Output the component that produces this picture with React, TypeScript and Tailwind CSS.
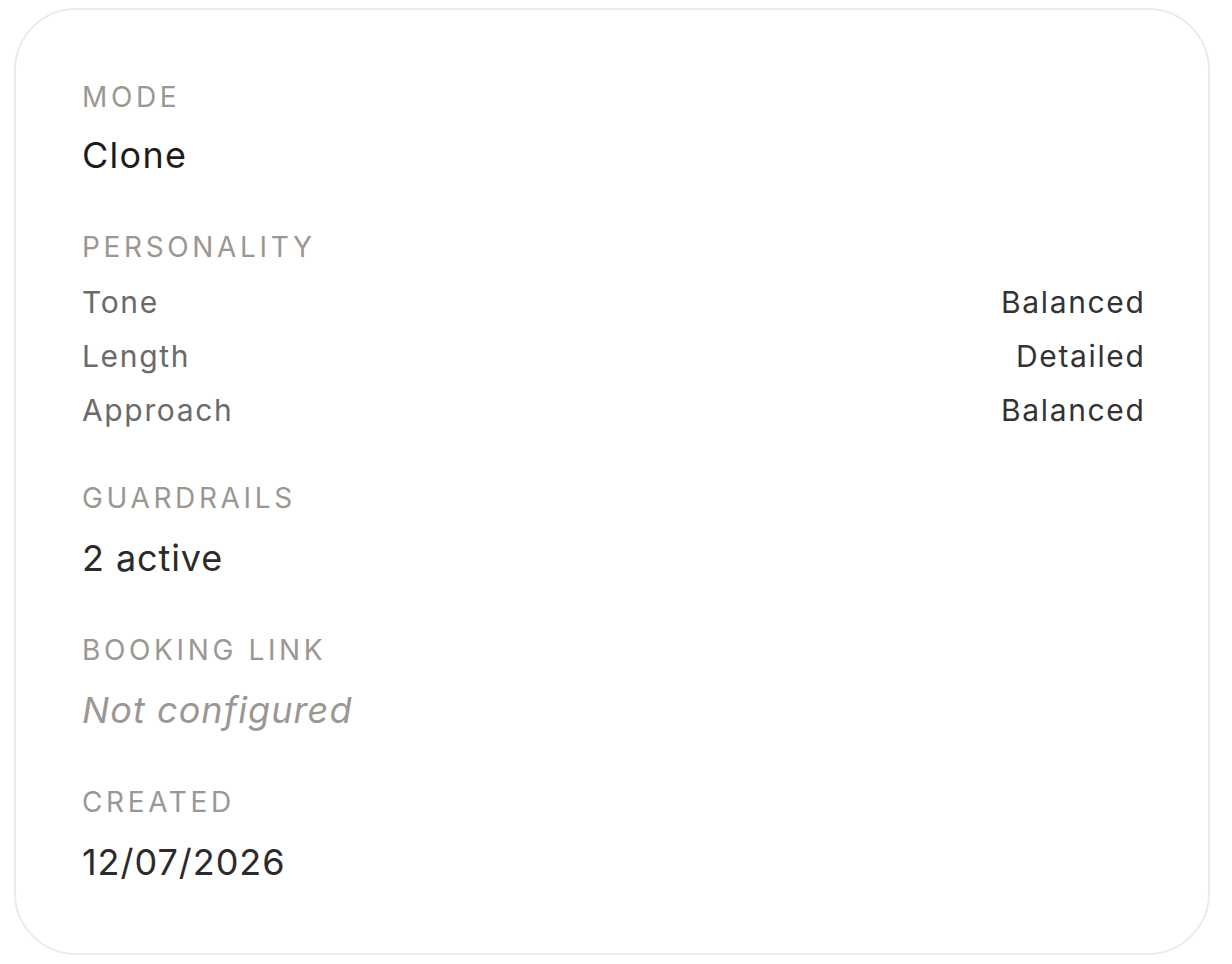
import React from "react";

function Label({ children }: { children: React.ReactNode }) {
  return (
    <div className="text-[28px] leading-[36px] tracking-[0.13em] uppercase text-[#9b9792]">
      {children}
    </div>
  );
}

function Row({ k, v }: { k: string; v: string }) {
  return (
    <div className="flex items-center justify-between text-[30px] leading-[40px] tracking-[0.055em]">
      <span className="text-[#6b6a69]">{k}</span>
      <span className="text-[#333333] -mr-[3.5px]">{v}</span>
    </div>
  );
}

export default function App() {
  return (
    <div
      className="w-[1232px] h-[964px] bg-white pt-[8px] pl-[14px]"
      style={{ fontFamily: "Inter, 'Noto Sans', sans-serif" }}
    >
      <div className="w-[1196px] h-[947px] rounded-[62px] border-2 border-[#ebebeb] bg-white px-[66px] pt-[69px]">
        <div className="flex flex-col gap-[50px]">
          <div>
            <Label>Mode</Label>
            <div className="mt-[16px] text-[36px] leading-[48px] tracking-[0.035em] text-[#1c1c1c]">Clone</div>
          </div>
          <div>
            <Label>Personality</Label>
            <div className="mt-[17px] flex flex-col gap-[14px]">
              <Row k="Tone" v="Balanced" />
              <Row k="Length" v="Detailed" />
              <Row k="Approach" v="Balanced" />
            </div>
          </div>
          <div>
            <Label>Guardrails</Label>
            <div className="mt-[18px] text-[36px] leading-[48px] tracking-[0.025em] text-[#2b2b2b]">2 active</div>
          </div>
          <div>
            <Label>Booking Link</Label>
            <div className="mt-[18px] text-[36px] leading-[48px] tracking-[0.03em] italic text-[#9b9792]">Not configured</div>
          </div>
          <div>
            <Label>Created</Label>
            <div className="mt-[18px] text-[36px] leading-[48px] tracking-[0.027em] text-[#2b2b2b]">12/07/2026</div>
          </div>
        </div>
      </div>
    </div>
  );
}
